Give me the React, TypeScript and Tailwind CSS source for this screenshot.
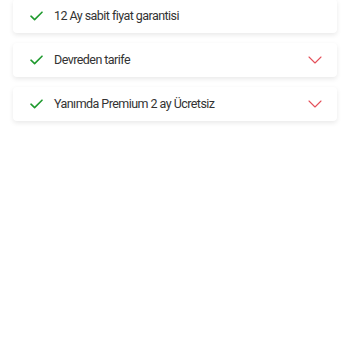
import React from 'react';

type Row = { label: string; expandable: boolean };

const ROWS: Row[] = [
  { label: '12 Ay sabit fiyat garantisi', expandable: false },
  { label: 'Devreden tarife', expandable: true },
  { label: 'Yanımda Premium 2 ay Ücretsiz', expandable: true },
];

const Check = () => (
  <svg width="13" height="10" viewBox="0 0 13 10" fill="none">
    <path d="M1 5.2 L4.6 8.6 L12 1.2" stroke="#1f9a2e" strokeWidth="1.6" strokeLinecap="round" strokeLinejoin="round" />
  </svg>
);

const Chevron = () => (
  <svg width="14" height="8" viewBox="0 0 14 8" fill="none">
    <path d="M1 1 L7 7 L13 1" stroke="#e4505a" strokeWidth="1.1" strokeLinecap="round" strokeLinejoin="round" />
  </svg>
);

export default function App() {
  return (
    <div className="w-[350px] h-[350px] bg-white overflow-hidden" style={{ fontFamily: 'Roboto, sans-serif' }}>
      <div className="flex flex-col gap-[10px] px-[13px] -mt-[1px]">
        {ROWS.map((row) => (
          <div
            key={row.label}
            className="h-[34px] flex items-center bg-white rounded-[4px] shadow-[0_2px_5px_rgba(0,0,0,0.09)] pl-[17px] pr-[15px]"
          >
            <Check />
            <span className="ml-[11px] text-[12.5px] text-[#333] tracking-[-0.55px] flex-1">{row.label}</span>
            {row.expandable && <Chevron />}
          </div>
        ))}
      </div>
    </div>
  );
}
